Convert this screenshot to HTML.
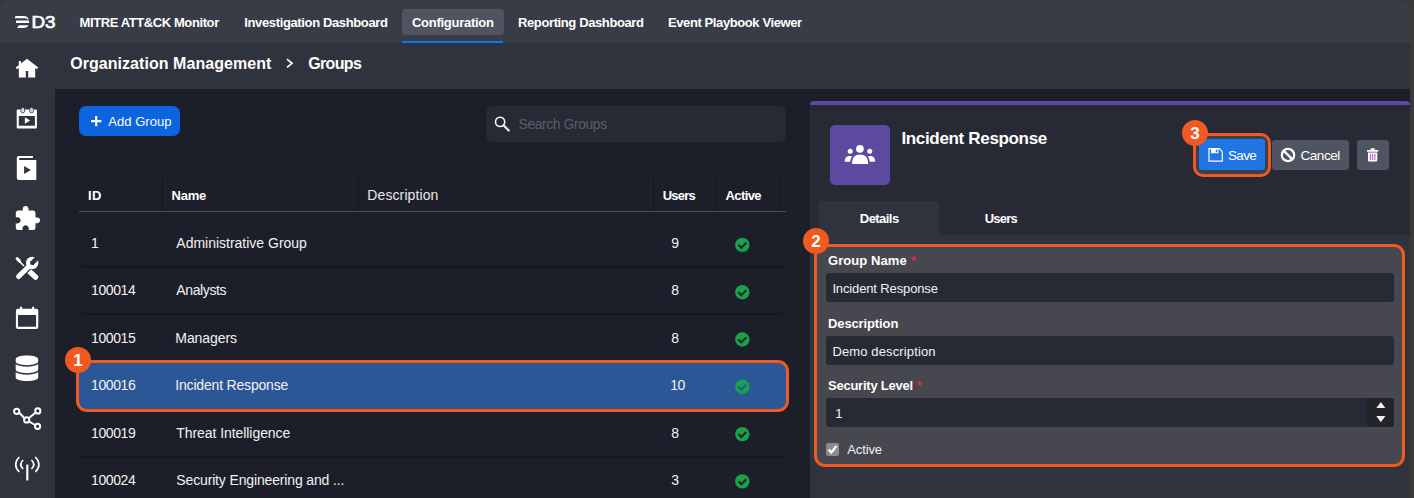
<!DOCTYPE html>
<html lang="en">
<head>
<meta charset="utf-8">
<title>Groups - Organization Management</title>
<style>
*{box-sizing:border-box;margin:0;padding:0}
html,body{width:1414px;height:498px;overflow:hidden;background:#3a3a3a}
#app{position:absolute;left:0;top:0;width:1410px;height:498px;background:#1c1f2a;overflow:hidden;clip-path:inset(1px 0 0 0 round 6px 8px 0 0)}
body{position:relative;font-family:"Liberation Sans",sans-serif;color:#fff;font-size:13px}
.abs{position:absolute}
.t{position:absolute;white-space:nowrap;line-height:1;color:#fff}
.b{font-weight:bold}
#topbar{left:0;top:0;width:1414px;height:43px;background:#383c47}
#subbar{left:0;top:43px;width:1414px;height:46px;background:#2f333e}
#sidebar{left:0;top:43px;width:55px;height:455px;background:#2f333e}
#navpill{left:402px;top:9px;width:102px;height:26px;background:#4f5460;border-radius:4px}
#navline{left:402px;top:41px;width:101px;height:2px;background:#0b78f0}
#addbtn{left:79px;top:106px;width:101px;height:30px;background:#0b65de;border-radius:7px}
#search{left:486px;top:106px;width:300px;height:36px;background:#262a35;border-radius:7px}
.vsep{position:absolute;top:178px;width:1px;height:33px;background:#13151d}
#hline{left:79px;top:211px;width:707px;height:1px;background:#4b4f5a}
.rline{position:absolute;left:79px;width:707px;height:8px;border-bottom:1.500px solid #15171f;border-radius:0 0 5px 5px;box-shadow:0 1px 1px rgba(0,0,0,.18)}
#selrow{left:76px;top:360px;width:713px;height:52px;border:3px solid #f05a22;border-radius:11px;background:#2b5797}
.badge{position:absolute;width:26px;height:26px;border-radius:50%;background:#f05a22;color:#fff;font-weight:bold;font-size:17px;line-height:28px;text-align:center}
#panel{left:810px;top:101px;width:600px;height:397px;background:#272a35;border-top:4px solid #5b4a9f;border-radius:4px 4px 0 0}
#avatar{left:830px;top:125px;width:60px;height:60px;background:#5b4a9f;border-radius:5px}
#tabact{left:819px;top:201px;width:120px;height:34px;background:#2f333e;border-radius:3px 3px 0 0}
#tabbody{left:810px;top:235px;width:600px;height:263px;background:#2f333e}
#box2{left:814px;top:244px;width:591.300px;height:222.800px;border:3px solid #f05a22;border-radius:11px;background:#46474f}
#box3{left:1193.300px;top:133px;width:78.200px;height:43.700px;border:3px solid #f05a22;border-radius:10px;background:#3c3f49}
.inp{position:absolute;left:826px;width:568px;height:29px;background:#272a35;border-radius:3px}
#savebtn{left:1199px;top:139px;width:66px;height:31px;background:#2176e3;border-radius:2px}
#cancelbtn{left:1272px;top:140px;width:77px;height:30px;background:#4f5461;border-radius:3px}
#delbtn{left:1357px;top:140px;width:32px;height:30px;background:#4f5461;border-radius:3px}
#spin{left:1367px;top:398px;width:27px;height:29px;background:#222429;border-radius:0 3px 3px 0}
#chk{left:826px;top:443px;width:13px;height:13px;background:#8b8b8b;border-radius:2px}
svg{position:absolute;overflow:visible}
</style>
</head>
<body>
<div id="app">
<div class="abs" id="topbar"></div>
<div class="abs" id="subbar"></div>
<div class="abs" id="sidebar"></div>

<!-- top navigation -->
<div class="abs" id="navpill"></div>
<div class="abs" id="navline"></div>
<div class="t b" style="left:79.50px;top:16px;font-size:13px;letter-spacing:-0.401px;">MITRE ATT&amp;CK Monitor</div>
<div class="t b" style="left:244.30px;top:16px;font-size:13px;letter-spacing:-0.366px;">Investigation Dashboard</div>
<div class="t b" style="left:412.00px;top:16px;font-size:13px;letter-spacing:-0.272px;">Configuration</div>
<div class="t b" style="left:518.00px;top:16px;font-size:13px;letter-spacing:-0.386px;">Reporting Dashboard</div>
<div class="t b" style="left:668.00px;top:16px;font-size:13px;letter-spacing:-0.402px;">Event Playbook Viewer</div>
<div class="t b" style="left:70.20px;top:56px;font-size:16px;letter-spacing:0.050px;">Organization Management</div>
<div class="t b" style="left:308.20px;top:56px;font-size:16px;letter-spacing:-0.638px;">Groups</div>
<svg style="left:280px;top:54px" width="20" height="20" viewBox="280 54 20 20"><path d="M287 59.200 L292 63.300 L287 67.400" fill="none" stroke="#fff" stroke-width="1.700"/></svg>


<!-- left list -->
<div class="abs" id="addbtn"></div>
<div class="abs" id="search"></div>
<div class="vsep" style="left:162px"></div>
<div class="vsep" style="left:358px"></div>
<div class="vsep" style="left:653px"></div>
<div class="vsep" style="left:716px"></div>
<div class="vsep" style="left:779px"></div>
<div class="abs" id="hline"></div>
<div class="rline" style="top:259px"></div>
<div class="rline" style="top:306px"></div>
<div class="rline" style="top:449px"></div>
<div class="rline" style="top:495px"></div>
<div class="abs" id="selrow"></div>
<div class="t" style="left:108.20px;top:115px;font-size:13px;letter-spacing:0.057px;">Add Group</div>
<div class="t" style="left:518.50px;top:117px;font-size:14px;letter-spacing:-0.455px;color:#585d69;">Search Groups</div>
<div class="t b" style="left:88.00px;top:189px;font-size:13px;letter-spacing:0.388px;">ID</div>
<div class="t b" style="left:171.50px;top:189px;font-size:13px;letter-spacing:-0.226px;">Name</div>
<div class="t" style="left:367.30px;top:188px;font-size:14px;letter-spacing:0.106px;color:#e8e8ea;">Description</div>
<div class="t b" style="left:662.70px;top:189px;font-size:13px;letter-spacing:-0.800px;">Users</div>
<div class="t b" style="left:725.50px;top:189px;font-size:13px;letter-spacing:-0.598px;">Active</div>
<div class="t" style="left:91.00px;top:236px;font-size:14px;color:#f2f2f4;">1</div>
<div class="t" style="left:176.30px;top:236px;font-size:14px;letter-spacing:-0.007px;color:#f2f2f4;">Administrative Group</div>
<div class="t" style="left:671.20px;top:236px;font-size:14px;color:#f2f2f4;">9</div>
<div class="t" style="left:91.00px;top:283px;font-size:14px;letter-spacing:-0.386px;color:#f2f2f4;">100014</div>
<div class="t" style="left:176.30px;top:283px;font-size:14px;letter-spacing:-0.373px;color:#f2f2f4;">Analysts</div>
<div class="t" style="left:671.20px;top:283px;font-size:14px;color:#f2f2f4;">8</div>
<div class="t" style="left:91.00px;top:331px;font-size:14px;letter-spacing:-0.386px;color:#f2f2f4;">100015</div>
<div class="t" style="left:175.30px;top:331px;font-size:14px;letter-spacing:-0.079px;color:#f2f2f4;">Managers</div>
<div class="t" style="left:671.20px;top:331px;font-size:14px;color:#f2f2f4;">8</div>
<div class="t" style="left:91.00px;top:378px;font-size:14px;letter-spacing:-0.386px;color:#f2f2f4;">100016</div>
<div class="t" style="left:175.30px;top:378px;font-size:14px;letter-spacing:-0.186px;color:#f2f2f4;">Incident Response</div>
<div class="t" style="left:670.20px;top:378px;font-size:14px;letter-spacing:-0.486px;color:#f2f2f4;">10</div>
<div class="t" style="left:91.00px;top:426px;font-size:14px;letter-spacing:-0.386px;color:#f2f2f4;">100019</div>
<div class="t" style="left:176.30px;top:426px;font-size:14px;letter-spacing:-0.066px;color:#f2f2f4;">Threat Intelligence</div>
<div class="t" style="left:671.20px;top:426px;font-size:14px;color:#f2f2f4;">8</div>
<div class="t" style="left:91.00px;top:473px;font-size:14px;letter-spacing:-0.386px;color:#f2f2f4;">100024</div>
<div class="t" style="left:176.30px;top:473px;font-size:14px;letter-spacing:-0.145px;color:#f2f2f4;">Security Engineering and ...</div>
<div class="t" style="left:671.20px;top:473px;font-size:14px;color:#f2f2f4;">3</div>
<svg style="left:0;top:89px" width="810" height="409" viewBox="0 89 810 409">
<path d="M91 121.200 H101.400 M96.200 116.100 V126.300" stroke="#fff" stroke-width="2.200" fill="none"/>
<circle cx="500.100" cy="121.900" r="4.600" fill="none" stroke="#fff" stroke-width="1.600"/><path d="M503.600 125.400 L508.700 130.500" stroke="#f6ece0" stroke-width="2.200" stroke-linecap="round"/>
<circle cx="742.3" cy="244.9" r="7.200" fill="#19a24b"/><path d="M738.4 244.9 L741.3 247.8 L746.3 242.8" fill="none" stroke="#1c1f2a" stroke-width="2"/>
<circle cx="742.3" cy="292.2" r="7.200" fill="#19a24b"/><path d="M738.4 292.2 L741.3 295.1 L746.3 290.1" fill="none" stroke="#1c1f2a" stroke-width="2"/>
<circle cx="742.3" cy="339.5" r="7.200" fill="#19a24b"/><path d="M738.4 339.5 L741.3 342.4 L746.3 337.4" fill="none" stroke="#1c1f2a" stroke-width="2"/>
<circle cx="742.3" cy="386.8" r="7.200" fill="#19a24b"/><path d="M738.4 386.8 L741.3 389.7 L746.3 384.7" fill="none" stroke="#2b5797" stroke-width="2"/>
<circle cx="742.3" cy="434.1" r="7.200" fill="#19a24b"/><path d="M738.4 434.1 L741.3 437.0 L746.3 432.0" fill="none" stroke="#1c1f2a" stroke-width="2"/>
<circle cx="742.3" cy="481.4" r="7.200" fill="#19a24b"/><path d="M738.4 481.4 L741.3 484.3 L746.3 479.3" fill="none" stroke="#1c1f2a" stroke-width="2"/>
</svg>
<div class="badge" style="left:65px;top:347px">1</div>

<!-- right panel -->
<div class="abs" id="panel"></div>
<div class="abs" id="avatar"></div>
<div class="abs" id="tabact"></div>
<div class="abs" id="tabbody"></div>
<div class="abs" id="box2"></div>
<div class="abs" id="box3"></div>
<div class="abs" id="savebtn"></div>
<div class="abs" id="cancelbtn"></div>
<div class="abs" id="delbtn"></div>
<div class="inp" style="top:273px"></div>
<div class="inp" style="top:336px"></div>
<div class="inp" style="top:398px"></div>
<div class="abs" id="spin"></div>
<div class="abs" id="chk"></div>
<div class="t b" style="left:901.40px;top:130px;font-size:17px;letter-spacing:-0.330px;">Incident Response</div>
<div class="t" style="left:1228.00px;top:149px;font-size:13.5px;letter-spacing:-0.687px;">Save</div>
<div class="t" style="left:1300.40px;top:149px;font-size:13.5px;letter-spacing:-0.425px;">Cancel</div>
<div class="t b" style="left:859.80px;top:212px;font-size:13px;letter-spacing:-0.550px;">Details</div>
<div class="t b" style="left:984.70px;top:212px;font-size:13px;letter-spacing:-0.800px;">Users</div>
<div class="t b" style="left:828.00px;top:254px;font-size:13px;letter-spacing:0.069px;">Group Name</div>
<div class="t b" style="left:910.70px;top:254px;font-size:13px;color:#e0294a;">*</div>
<div class="t" style="left:832.40px;top:282px;font-size:13px;letter-spacing:-0.134px;color:#f2f2f4;">Incident Response</div>
<div class="t b" style="left:828.00px;top:317px;font-size:13px;letter-spacing:-0.117px;">Description</div>
<div class="t" style="left:832.40px;top:345px;font-size:13px;letter-spacing:0.132px;color:#f2f2f4;">Demo description</div>
<div class="t b" style="left:828.00px;top:379px;font-size:13px;letter-spacing:-0.242px;">Security Level</div>
<div class="t b" style="left:916.50px;top:379px;font-size:13px;color:#e0294a;">*</div>
<div class="t" style="left:835.30px;top:407px;font-size:13px;color:#f2f2f4;">1</div>
<div class="t" style="left:847.30px;top:443px;font-size:13px;letter-spacing:-0.134px;color:#f2f2f4;">Active</div>
<svg style="left:810px;top:101px" width="600" height="397" viewBox="810 101 600 397">
<g fill="#fff"><circle cx="859.900" cy="148.800" r="3.900"/><path d="M852 163.900 C852 157.500 855 154.500 860 154.500 C865 154.500 868.200 157.500 868.200 163.900 Z"/><circle cx="850.200" cy="151.200" r="2.500"/><path d="M844.700 161.800 C844.700 158 846.500 155.900 849.600 155.900 C850.600 155.900 851.500 156.100 852.200 156.600 C850.800 158 850.300 160 850.200 161.800 Z"/><circle cx="869.700" cy="151.200" r="2.500"/><path d="M875.200 161.800 C875.200 158 873.400 155.900 870.300 155.900 C869.300 155.900 868.400 156.100 867.700 156.600 C869.100 158 869.600 160 869.700 161.800 Z"/></g>
<path d="M1209 148.700 H1219.300 L1222.300 151.700 V161.100 H1209 Z" fill="none" stroke="#fff" stroke-width="1.200"/><path fill-rule="evenodd" d="M1211.100 148.700 H1218.400 V153.200 H1211.100 Z M1215.800 149.500 V152.200 H1217.200 V149.500 Z" fill="#fff"/>
<circle cx="1288" cy="155" r="6.200" fill="none" stroke="#fff" stroke-width="2.200"/><path d="M1283.600 150.600 L1292.400 159.400" stroke="#fff" stroke-width="2.200"/>
<g fill="#fff"><path d="M1370.700 148.200 H1374.600 V150 H1378.300 V151.800 H1367 V150 H1370.700 Z"/><path d="M1368 152.600 H1377.300 V160.200 A1.200 1.200 0 0 1 1376.100 161.400 H1369.200 A1.200 1.200 0 0 1 1368 160.200 Z"/></g><path d="M1370.400 153.800 V160 M1372.650 153.800 V160 M1374.900 153.800 V160" stroke="#b44fc0" stroke-width="1" fill="none"/>
<path d="M1376.300 408.100 H1385.400 L1380.850 402.100 Z M1376.300 416.100 H1385.400 L1380.850 422.200 Z" fill="#eef2fb"/>
<path d="M828.600 449.500 L831.300 452.500 L836.500 446" fill="none" stroke="#fff" stroke-width="2.200"/>
</svg>
<div class="badge" style="left:803px;top:228px">2</div>
<div class="badge" style="left:1182px;top:120px">3</div>

<!-- logo -->
<svg style="left:0;top:0" width="60" height="43" viewBox="0 0 60 43">
  <g fill="#fff">
    <path d="M15.400 16 H23.800 C26.500 16 28.200 17.500 28.900 19.600 L26.900 19.100 C26.300 18.400 25.200 18.300 23.800 18.300 H14.800 Z"/>
    <path d="M16.300 20.600 H28.900 C29.200 21.400 29.200 22.300 29 23.100 H15.900 Z"/>
    <path d="M19 25.300 H28.500 C27.600 27 26 28 23.800 28 H17 Z"/>
  </g>
  <text x="31.500" y="28" font-family="Liberation Sans, sans-serif" font-size="16.600" fill="#fff" stroke="#fff" stroke-width="0.700" textLength="24" lengthAdjust="spacingAndGlyphs">D3</text>
</svg>
<!-- sidebar icons -->
<svg style="left:0;top:43px" width="55" height="455" viewBox="0 43 55 455">
 <g fill="#fff">
  <!-- home -->
  <path d="M27 58.800 L38.300 67.600 L37 69.300 L35.200 67.900 V77.600 H28.200 V71 H25.800 V77.600 H18.800 V67.900 L17 69.300 L15.700 67.600 Z M18.800 60.900 h2.200 v3.600 l-2.200 1.800 z"/>
  <!-- calendar play -->
  <path fill-rule="evenodd" d="M17.500 109.600 H36.100 A0.800 0.800 0 0 1 36.900 110.400 V127.600 A0.800 0.800 0 0 1 36.100 128.400 H17.500 A0.800 0.800 0 0 1 16.700 127.600 V110.400 A0.800 0.800 0 0 1 17.500 109.600 Z M18.800 116.100 V125.700 H34.900 V116.100 Z"/>
  <rect x="20.900" y="107.500" width="3.600" height="5.400" rx="1.800" stroke="#2f333e" stroke-width="0.900"/>
  <rect x="29.700" y="107.500" width="3.600" height="5.400" rx="1.800" stroke="#2f333e" stroke-width="0.900"/>
  <path d="M22.700 108.800 V111.600 M31.500 108.800 V111.600" stroke="#9a9ca3" stroke-width="0.700" fill="none"/>
  <path d="M24.900 117.300 L30.200 120.500 L24.900 123.700 Z"/>
  <!-- playbook -->
  <path fill-rule="evenodd" d="M18.600 155.900 H32.900 V159.900 H36.300 V180 H19 A2.200 2.200 0 0 1 16.800 177.800 V157.700 A1.800 1.800 0 0 1 18.600 155.900 Z M19.200 158 H32.900 V159.900 H19.200 Z M24.100 166.100 V173.900 L30.900 170 Z"/>
  <!-- puzzle -->
  <g transform="translate(13.490 204.750) scale(1.157 1.152)">
   <path d="M20.500 11H19V7c0-1.100-.9-2-2-2h-4V3.500C13 2.120 11.880 1 10.500 1S8 2.120 8 3.500V5H4c-1.100 0-1.990.9-1.990 2v3.800H3.500c1.490 0 2.700 1.210 2.700 2.700s-1.210 2.700-2.700 2.700H2V20c0 1.100.9 2 2 2h3.800v-1.500c0-1.490 1.210-2.700 2.700-2.700 1.490 0 2.700 1.210 2.700 2.700V22H17c1.100 0 2-.9 2-2v-4h1.500c1.380 0 2.500-1.120 2.500-2.500S21.880 11 20.500 11z"/>
  </g>
  <!-- tools -->
  <g fill="none" stroke="#fff">
   <path d="M29.800 271.800 L35.500 277.100" stroke-width="5.400" stroke-linecap="round"/>
   <path d="M18.800 260.800 L25 267" stroke-width="1.600"/>
   <path d="M17.100 258.600 L19.700 261.200" stroke-width="3" stroke-linecap="round"/>
   <path d="M20.800 274.400 L31.500 263.700" stroke="#2f333e" stroke-width="7.400"/>
   <path d="M18.600 276.600 L31 264.200" stroke-width="5" stroke-linecap="round"/>
  </g>
  <circle cx="32.200" cy="263" r="6.200"/>
  <path d="M31.600 263.600 L37.600 257.600" stroke="#2f333e" stroke-width="4.400" fill="none" stroke-linecap="butt"/>
  <circle cx="32.300" cy="262.900" r="2.200" fill="#2f333e"/>
  <!-- calendar -->
  <path fill-rule="evenodd" d="M17.900 308.800 H36.300 A2 2 0 0 1 38.300 310.800 V326.900 A2 2 0 0 1 36.300 328.900 H17.900 A2 2 0 0 1 15.900 326.900 V310.800 A2 2 0 0 1 17.900 308.800 Z M18 315 V326.800 H36.100 V315 Z"/>
  <rect x="20" y="306.800" width="2.100" height="3" rx="0.300"/>
  <rect x="32.100" y="306.800" width="2.100" height="3" rx="0.300"/>
  <!-- database -->
  <g transform="translate(15.700 355.600) scale(0.05022 0.0498)">
   <path d="M448 73.143v45.714C448 159.143 347.667 192 224 192S0 159.143 0 118.857V73.143C0 32.857 100.333 0 224 0s224 32.857 224 73.143zM448 176v102.857C448 319.143 347.667 352 224 352S0 319.143 0 278.857V176c48.125 33.143 136.208 48.572 224 48.572S399.874 209.143 448 176zm0 160v102.857C448 479.143 347.667 512 224 512S0 479.143 0 438.857V336c48.125 33.143 136.208 48.572 224 48.572S399.874 369.143 448 336z"/>
  </g>
 </g>
 <!-- nodes -->
 <g fill="none" stroke="#fff" stroke-width="2">
  <path d="M19.300 412.800 L24.300 418 M29.300 417.800 L35.300 412.800 M29.400 421.600 L35 425"/>
  <circle cx="16.700" cy="411.300" r="2.600"/>
  <circle cx="37.800" cy="410.900" r="2.600"/>
  <circle cx="26.700" cy="419.900" r="2.600"/>
  <circle cx="37.600" cy="426.300" r="2.600"/>
 </g>
 <!-- broadcast -->
 <g fill="none" stroke="#fff" stroke-width="1.700" stroke-linecap="round">
  <path d="M27.300 464.600 V480.400" stroke-width="2.200" stroke-linecap="butt"/>
  <path d="M18.900 457.500 C14.700 461.500 14.700 467.500 18.900 471.500"/>
  <path d="M35.700 457.500 C39.900 461.500 39.900 467.500 35.700 471.500"/>
  <path d="M22.700 460.500 C20.300 463 20.300 466 22.700 468.500"/>
  <path d="M31.900 460.500 C34.300 463 34.300 466 31.900 468.500"/>
 </g>
</svg>

</div>
</body>
</html>
